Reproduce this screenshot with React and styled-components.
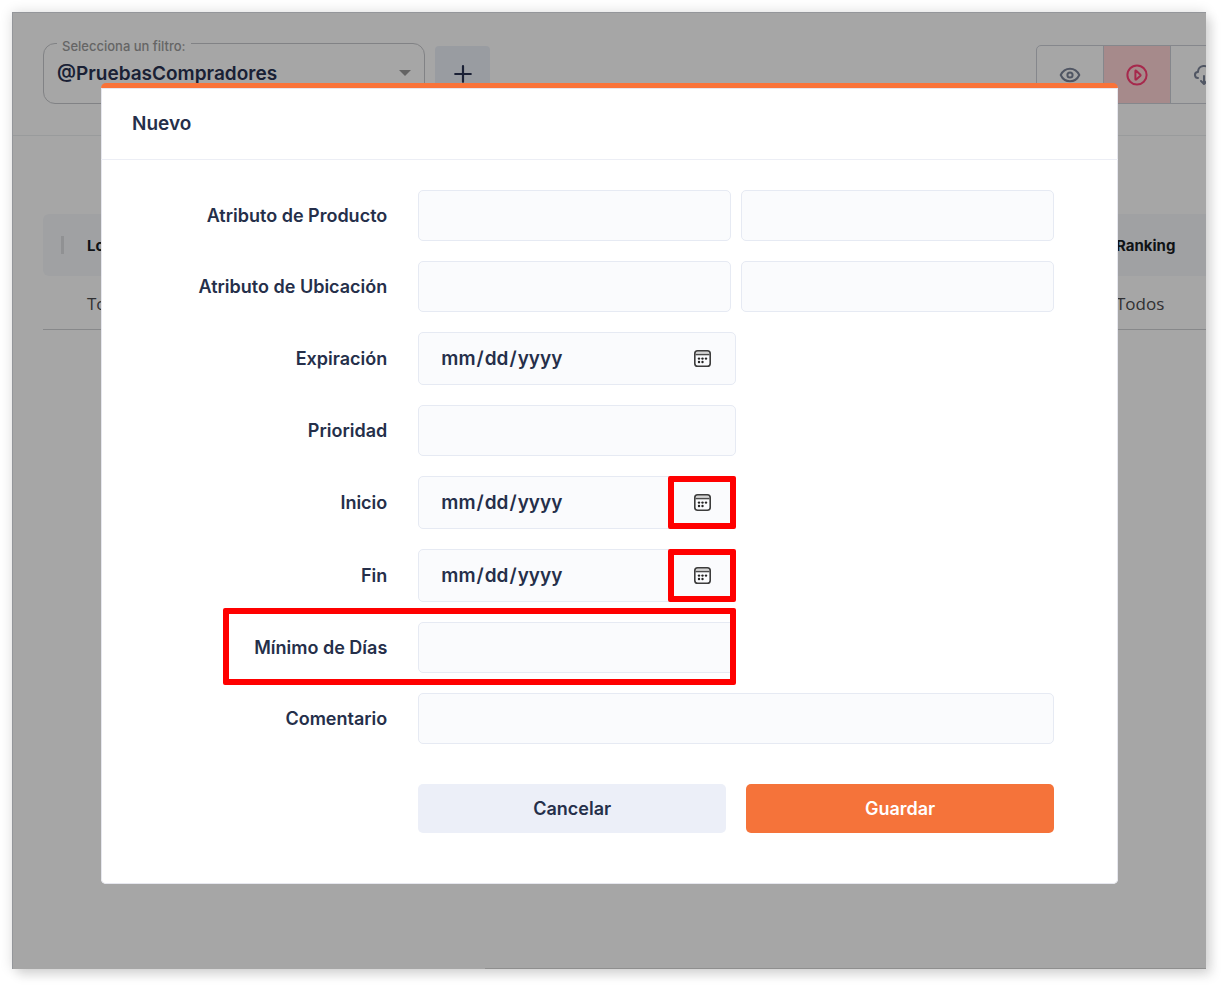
import { useRef } from 'react';
import styled, { createGlobalStyle } from 'styled-components';

const attributes = [
  { id: 'producto', label: 'Atributo de Producto' },
  { id: 'ubicacion', label: 'Atributo de Ubicación' },
];

export default function App() {
  const onSubmit = (e) => {
    e.preventDefault();
  };

  return (
    <>
      <GlobalStyle />
      <Page>
        <Frame>
          <Header>
            <Filter>
              <FilterLabel htmlFor="filtro">Selecciona un filtro:</FilterLabel>
              <FilterSelect id="filtro">
                <option>@PruebasCompradores</option>
              </FilterSelect>
              <Caret viewBox="0 0 12 6" aria-hidden="true">
                <path d="M0 0h12L6 6z" />
              </Caret>
            </Filter>
            <AddButton type="button" aria-label="Agregar">
              <PlusIcon />
            </AddButton>
            <Toolbar>
              <ToolButton type="button" aria-label="Ver">
                <EyeIcon />
              </ToolButton>
              <ToolButton type="button" aria-label="Ejecutar" $active>
                <PlayIcon />
              </ToolButton>
              <ToolButton type="button" aria-label="Descargar">
                <CloudIcon />
              </ToolButton>
            </Toolbar>
          </Header>

          <Table>
            <thead>
              <tr>
                <HandleCell>
                  <Handle />
                </HandleCell>
                <HeadCell>Locación</HeadCell>
                <HeadCell $last>Ranking</HeadCell>
              </tr>
            </thead>
            <tbody>
              <tr>
                <Cell />
                <Cell>Todos</Cell>
                <Cell>Todos</Cell>
              </tr>
            </tbody>
          </Table>
          <BottomRule />

          <Backdrop>
            <Modal role="dialog" aria-labelledby="titulo">
              <ModalHeader>
                <Title id="titulo">Nuevo</Title>
              </ModalHeader>
              <Form onSubmit={onSubmit}>
                {attributes.map((item) => (
                  <Row key={item.id}>
                    <Label htmlFor={item.id}>{item.label}</Label>
                    <Pair>
                      <Input id={item.id} />
                      <Input aria-label={`${item.label} valor`} />
                    </Pair>
                  </Row>
                ))}
                <DateRow id="expiracion" label="Expiración" />
                <Row>
                  <Label htmlFor="prioridad">Prioridad</Label>
                  <Half>
                    <Input id="prioridad" />
                  </Half>
                </Row>
                <DateRow id="inicio" label="Inicio" marked />
                <DateRow id="fin" label="Fin" marked />
                <Row>
                  <Label htmlFor="minimo">Mínimo de Días</Label>
                  <Half>
                    <Input id="minimo" />
                    <RowMark />
                  </Half>
                </Row>
                <Row>
                  <Label htmlFor="comentario">Comentario</Label>
                  <Input id="comentario" />
                </Row>
                <Row>
                  <Actions>
                    <Button type="button">Cancelar</Button>
                    <Button type="submit" $primary>
                      Guardar
                    </Button>
                  </Actions>
                </Row>
              </Form>
            </Modal>
          </Backdrop>
        </Frame>
      </Page>
    </>
  );
}

function DateRow({ id, label, marked }) {
  const inputRef = useRef(null);

  return (
    <Row>
      <Label htmlFor={id}>{label}</Label>
      <Half>
        <DateInput id={id} type="date" ref={inputRef} />
        <PickerButton
          type="button"
          aria-label={`Abrir calendario ${label}`}
          $marked={marked}
          onClick={() => inputRef.current.showPicker()}
        >
          <CalendarIcon />
        </PickerButton>
      </Half>
    </Row>
  );
}

const PlusIcon = () => (
  <svg width="18" height="18" viewBox="0 0 18 18" aria-hidden="true">
    <path
      d="M9 1.2v15.6M1.2 9h15.6"
      stroke="currentColor"
      strokeWidth="2.2"
      strokeLinecap="round"
    />
  </svg>
);

const EyeIcon = () => (
  <svg width="24" height="24" viewBox="0 0 24 24" fill="none" aria-hidden="true">
    <path
      d="M2.7 12C4.6 8 8 5.7 12 5.7s7.4 2.3 9.3 6.3c-1.9 4-5.3 6.3-9.3 6.3S4.6 16 2.7 12z"
      stroke="currentColor"
      strokeWidth="2"
      strokeLinejoin="round"
    />
    <circle cx="12" cy="12" r="2.6" stroke="currentColor" strokeWidth="2" />
  </svg>
);

const PlayIcon = () => (
  <svg width="24" height="24" viewBox="0 0 24 24" fill="none" aria-hidden="true">
    <g stroke="currentColor" strokeWidth="2" strokeLinejoin="round">
      <circle cx="12" cy="12" r="9.6" />
      <path d="M10.4 8v8.2c0 .5.5.6.8.3l4.2-3.8c.3-.3.3-.7 0-1l-4.2-4c-.3-.3-.8-.2-.8.3z" />
    </g>
  </svg>
);

const CloudIcon = () => (
  <svg width="24" height="24" viewBox="0 0 24 24" fill="currentColor" aria-hidden="true">
    <path d="M14.29 17.29 13 18.59V13a1 1 0 0 0-2 0v5.59l-1.29-1.3a1 1 0 0 0-1.42 1.42l3 3a1 1 0 0 0 .33.21.94.94 0 0 0 .76 0 1 1 0 0 0 .33-.21l3-3a1 1 0 0 0-1.42-1.42ZM18.42 6.22A7 7 0 0 0 5.06 8.11 4 4 0 0 0 6 16a1 1 0 0 0 0-2 2 2 0 0 1 0-4A1 1 0 0 0 7 9a5 5 0 0 1 9.73-1.61 1 1 0 0 0 .78.67 3 3 0 0 1 .24 5.84 1 1 0 1 0 .5 1.94 5 5 0 0 0 .17-9.62Z" />
  </svg>
);

const CalendarIcon = () => (
  <svg width="17" height="17" viewBox="0 0 17 17" fill="none" aria-hidden="true">
    <path d="M1 3.5A2.5 2.5 0 0 1 3.5 1h10A2.5 2.5 0 0 1 16 3.5v1H1z" fill="#d4d4d4" />
    <rect x=".8" y=".8" width="15.4" height="15.4" rx="2.8" stroke="#3c3c3c" strokeWidth="1.6" />
    <path d="M1.5 4.6h14" stroke="#4a4a4a" strokeWidth="1.4" />
    <g fill="#222">
      <circle cx="5" cy="8.6" r="1.2" />
      <circle cx="8.5" cy="8.6" r="1.2" />
      <circle cx="12" cy="8.6" r="1.2" />
      <circle cx="5" cy="12" r="1.2" />
      <circle cx="8.5" cy="12" r="1.2" />
    </g>
  </svg>
);

const GlobalStyle = createGlobalStyle`
  * {
    box-sizing: border-box;
  }
  body {
    margin: 0;
    background: #fff;
    color: #252f4a;
    font-family: Inter, 'Liberation Sans', sans-serif;
  }
  button, input, select {
    font-family: inherit;
    color: inherit;
  }
`;

const Page = styled.div`
  padding: 12px 20px 20px 12px;
`;

const Frame = styled.div`
  position: relative;
  display: flex;
  flex-direction: column;
  min-height: calc(100vh - 32px);
  border-top: 1px solid #94969a;
  border-left: 1px solid #94969a;
  background: #fff;
  overflow: hidden;
  box-shadow: 0 0 12px rgba(0, 0, 0, 0.14), 6px 7px 10px rgba(0, 0, 0, 0.1);
`;

const Header = styled.header`
  display: flex;
  align-items: center;
  padding: 30px 0 31px 30px;
  border-bottom: 1px solid #eceef0;
`;

const Filter = styled.div`
  position: relative;
  width: 382px;
  height: 61px;
  border: 1px solid #c6c8cc;
  border-radius: 12px;
`;

const FilterLabel = styled.label`
  position: absolute;
  top: -7px;
  left: 13px;
  padding: 0 5px;
  background: #fff;
  color: #9c9c9c;
  font-size: 13px;
  line-height: 18px;
  font-weight: 500;
`;

const FilterSelect = styled.select`
  appearance: none;
  width: 100%;
  height: 100%;
  padding: 0 40px 0 13px;
  border: 0;
  background: transparent;
  color: #283252;
  font-size: 19px;
  font-weight: 600;
`;

const Caret = styled.svg`
  position: absolute;
  top: 26px;
  right: 13px;
  width: 12px;
  height: 6px;
  fill: #9a9a9a;
  pointer-events: none;
`;

const AddButton = styled.button`
  display: flex;
  align-items: center;
  justify-content: center;
  width: 55px;
  height: 55px;
  margin-left: 10px;
  border: 0;
  border-radius: 4px;
  background: #ecf0f8;
  color: #283252;
`;

const Toolbar = styled.div`
  display: flex;
  align-self: flex-end;
  height: 59px;
  margin-left: auto;
  margin-right: -33px;
  border: 1px solid #cdd0d8;
  border-radius: 5px;
`;

const ToolButton = styled.button`
  display: flex;
  align-items: center;
  justify-content: center;
  width: 67px;
  padding: 0;
  border: 0;
  border-right: 1px solid #cdd0d8;
  background: ${(props) => (props.$active ? '#ffd4d6' : 'transparent')};
  color: ${(props) => (props.$active ? '#ff3f76' : '#7c8499')};
`;

const Table = styled.table`
  width: calc(100% - 30px);
  margin: 78px 0 0 30px;
  border-collapse: collapse;
  table-layout: fixed;
  text-align: left;
`;

const HandleCell = styled.td`
  width: 44px;
  height: 62px;
  padding: 0 0 0 18px;
  border-radius: 6px 0 0 6px;
  background: #f6f8fb;
`;

const Handle = styled.div`
  width: 3px;
  height: 18px;
  background: #dedfe2;
`;

const HeadCell = styled.th`
  width: ${(props) => (props.$last ? '90px' : 'auto')};
  padding: 0;
  background: #f6f8fb;
  color: #181c24;
  font-size: 15px;
  font-weight: 700;
`;

const Cell = styled.td`
  height: 53px;
  padding: 2px 0 0;
  border-bottom: 1px solid #cfd1d4;
  color: #4b4b4e;
  font-family: 'Open Sans', 'Noto Sans', sans-serif;
  font-size: 17px;
`;

const BottomRule = styled.div`
  width: 721px;
  height: 1px;
  margin: auto 0 0 auto;
  background: #dcdcdc;
`;

const Backdrop = styled.div`
  position: absolute;
  inset: 0;
  padding: 70px 88px;
  background: rgba(0, 0, 0, 0.35);
`;

const Modal = styled.section`
  border-top: 5px solid #f97339;
  border-radius: 5px;
  background: #fff;
  box-shadow: inset 0 0 0 1px #e6e7ee;
`;

const ModalHeader = styled.header`
  padding: 24px 31px 23px;
  border-bottom: 1px solid #eceef5;
`;

const Title = styled.h2`
  margin: 0;
  font-size: 19px;
  line-height: 24px;
  font-weight: 600;
`;

const Form = styled.form`
  display: flex;
  flex-direction: column;
  gap: 20px;
  padding: 30px 64px 51px 32px;
`;

const Row = styled.div`
  display: grid;
  grid-template-columns: 2fr 5fr;
  column-gap: 31px;
  align-items: center;
`;

const Label = styled.label`
  font-size: 18px;
  line-height: 24px;
  font-weight: 600;
  text-align: right;
`;

const Pair = styled.div`
  display: grid;
  grid-template-columns: 1fr 1fr;
  gap: 10px;
`;

const Half = styled.div`
  position: relative;
  width: 50%;
`;

const Input = styled.input`
  display: block;
  width: 100%;
  height: 51px;
  padding: 0 21px;
  border: 1px solid #e6eaf3;
  border-radius: 5px;
  background: #fafbfd;
  font-size: 19px;
  font-weight: 600;
`;

const DateInput = styled(Input)`
  height: 53px;
  &::-webkit-calendar-picker-indicator {
    opacity: 0;
  }
`;

const PickerButton = styled.button`
  position: absolute;
  top: 0;
  right: 0;
  display: flex;
  align-items: center;
  justify-content: center;
  width: 68px;
  height: 100%;
  padding: 0;
  border: 6px solid ${(props) => (props.$marked ? '#ff0000' : 'transparent')};
  border-radius: 2px;
  background: transparent;
`;

const RowMark = styled.div`
  position: absolute;
  top: -14px;
  bottom: -12px;
  left: -195px;
  right: 0;
  border: 6px solid #ff0000;
  border-radius: 2px;
  pointer-events: none;
`;

const Actions = styled.div`
  grid-column: 2;
  display: grid;
  grid-template-columns: 1fr 1fr;
  gap: 20px;
  padding-top: 20px;
`;

const Button = styled.button`
  height: 49px;
  border: 0;
  border-radius: 5px;
  background: ${(props) => (props.$primary ? '#f5733a' : '#eceff8')};
  color: ${(props) => (props.$primary ? '#fff' : '#252f4a')};
  font-size: 18px;
  font-weight: 600;
  cursor: pointer;
`;
